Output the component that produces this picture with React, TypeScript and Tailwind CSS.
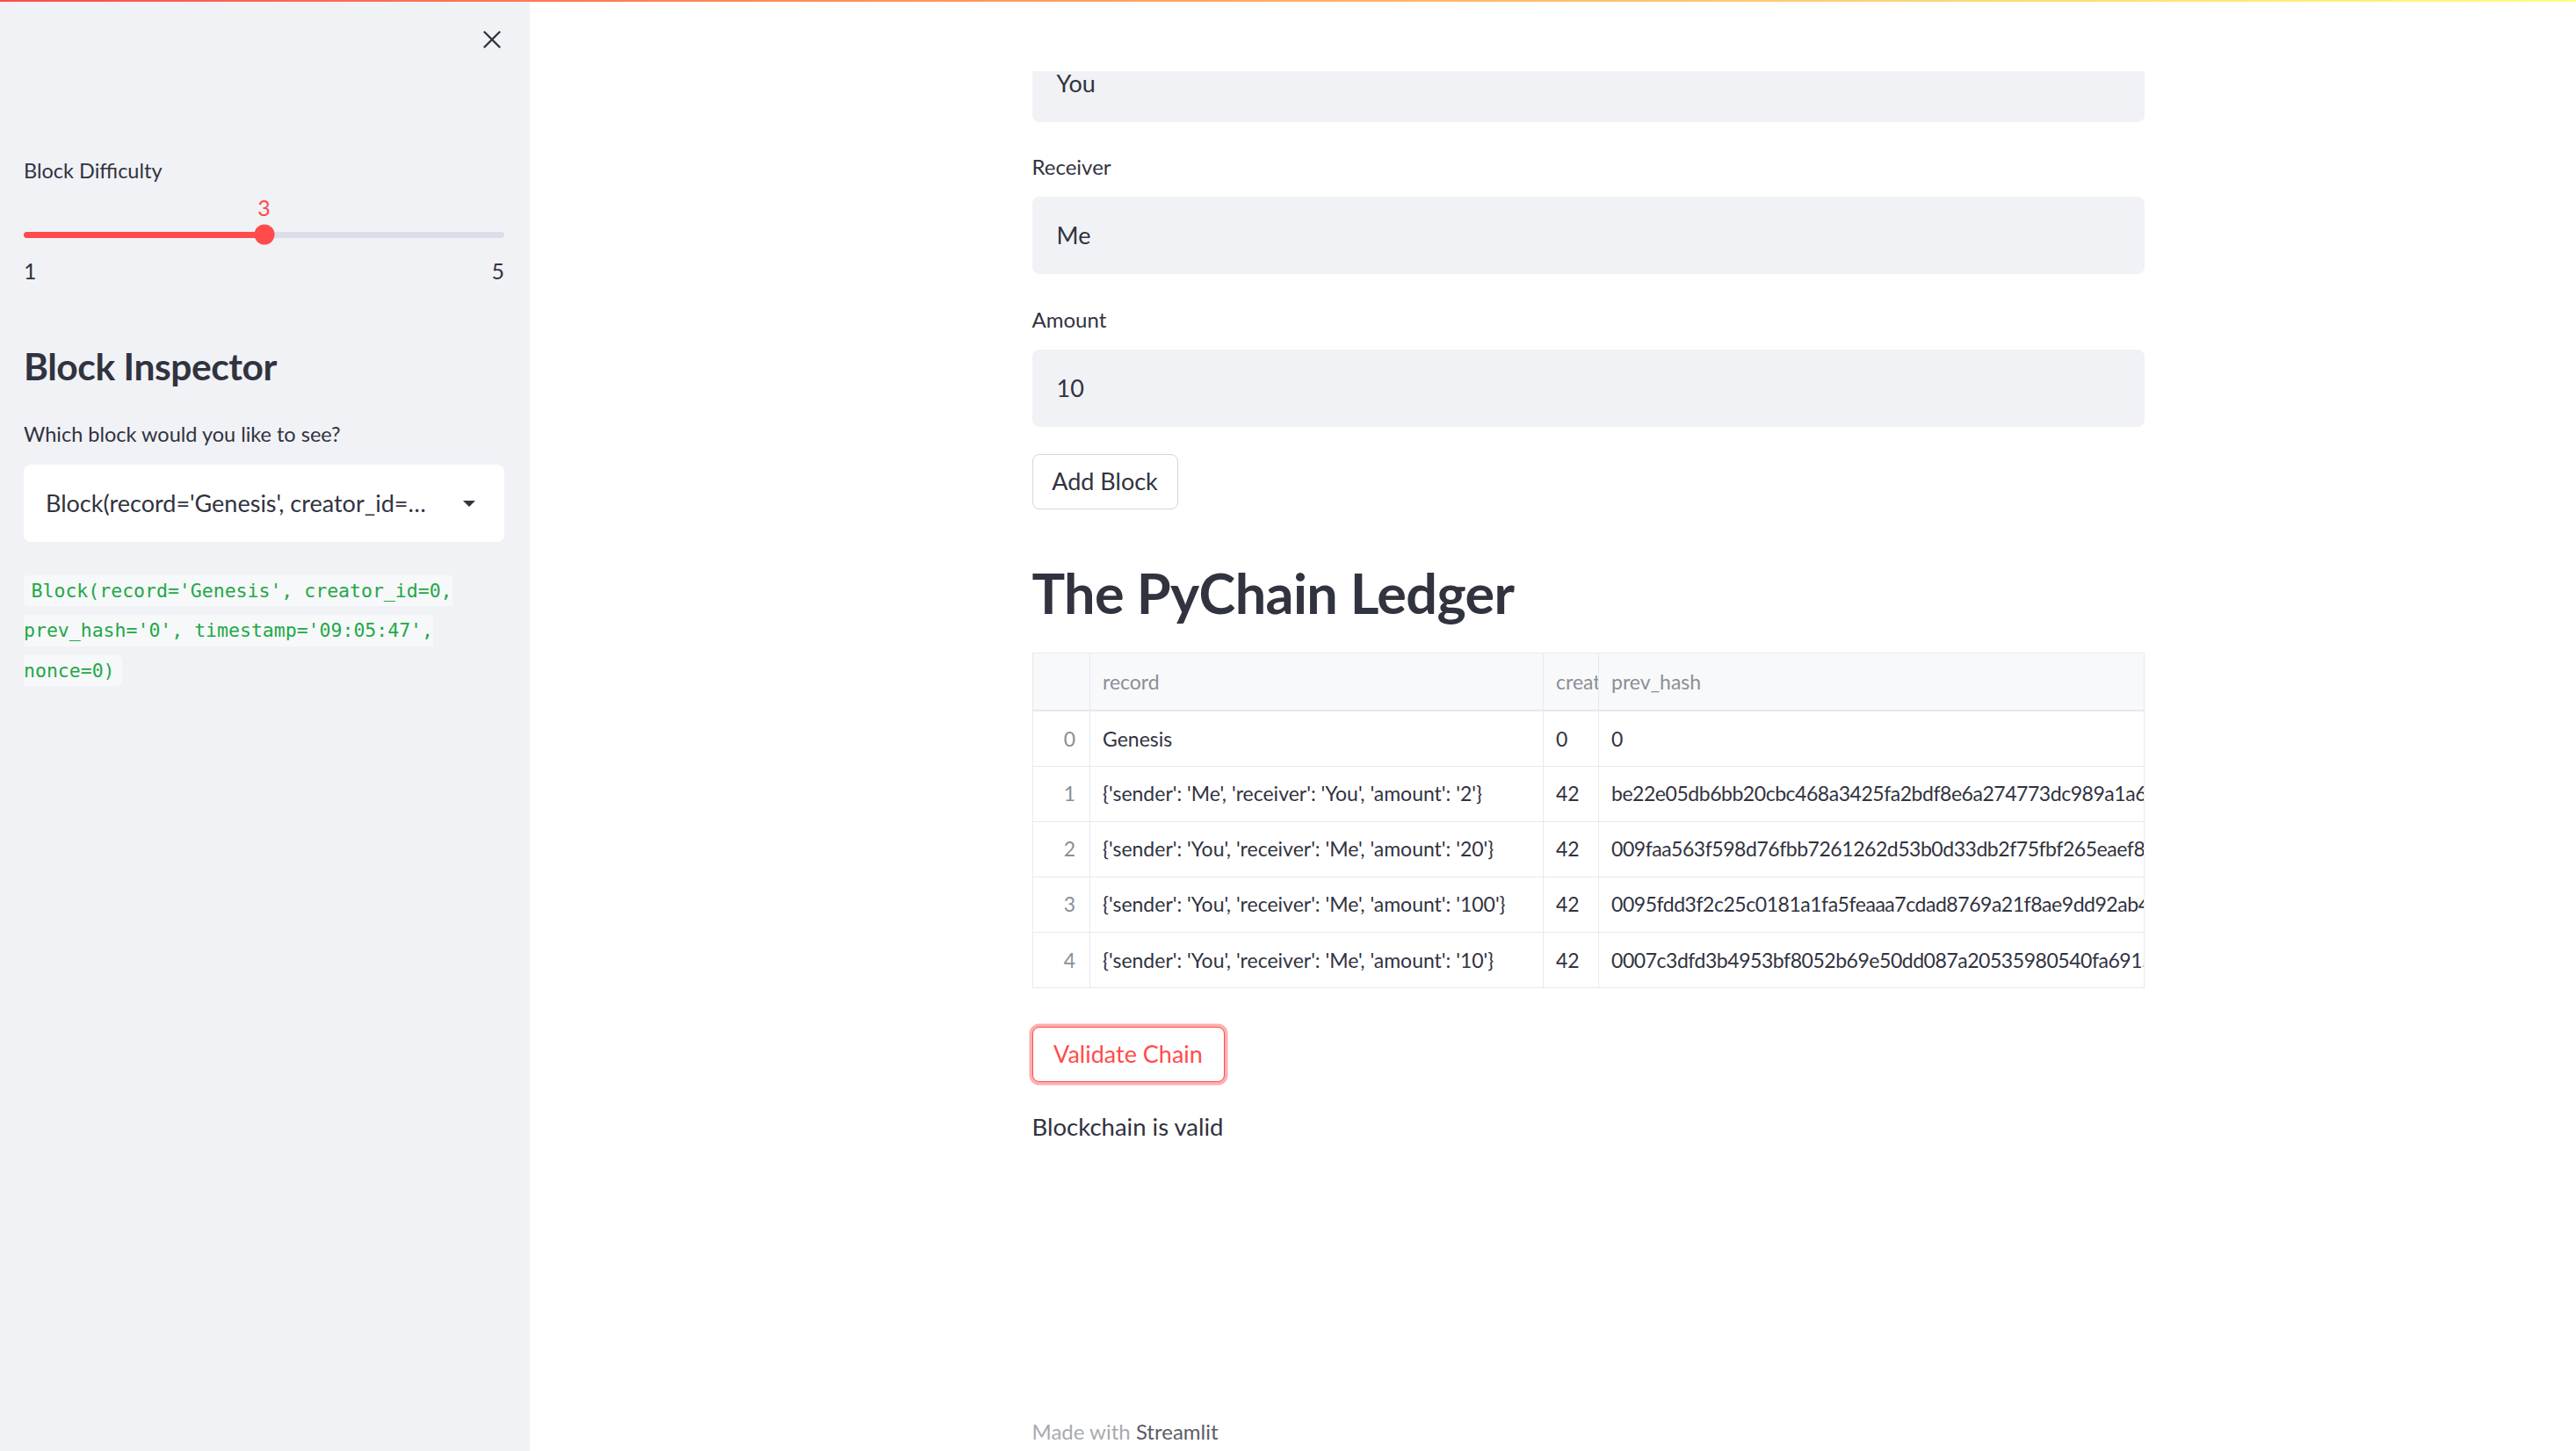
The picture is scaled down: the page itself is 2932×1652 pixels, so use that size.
import React from "react";

const SANS = "font-['Source_Sans_Pro','Lato',sans-serif]";

const rows = [
  { i: 0, record: "Genesis", creator: "0", hash: "0" },
  {
    i: 1,
    record: "{'sender': 'Me', 'receiver': 'You', 'amount': '2'}",
    creator: "42",
    hash: "be22e05db6bb20cbc468a3425fa2bdf8e6a274773dc989a1a6c0e2f71b8d0c3e",
  },
  {
    i: 2,
    record: "{'sender': 'You', 'receiver': 'Me', 'amount': '20'}",
    creator: "42",
    hash: "009faa563f598d76fbb7261262d53b0d33db2f75fbf265eaef8b1c33a7e20d41",
  },
  {
    i: 3,
    record: "{'sender': 'You', 'receiver': 'Me', 'amount': '100'}",
    creator: "42",
    hash: "0095fdd3f2c25c0181a1fa5feaaa7cdad8769a21f8ae9dd92ab47c1e0d3f5a92",
  },
  {
    i: 4,
    record: "{'sender': 'You', 'receiver': 'Me', 'amount': '10'}",
    creator: "42",
    hash: "0007c3dfd3b4953bf8052b69e50dd087a20535980540fa6915e2bd07c4a1f3e8",
  },
];

function Sidebar() {
  const pct = 50;
  return (
    <aside className={`w-[603px] shrink-0 h-full bg-[#f0f2f6] flex flex-col pl-[27px] pr-[29px] text-[#31333f] ${SANS}`}>
      <div className="h-[174px] flex justify-end items-start pt-[25px] mr-[-6px]">
        <div className="w-[40px] h-[40px] flex items-center justify-center">
          <svg width="20" height="20" viewBox="0 0 20 20" fill="none">
            <path d="M1.5 1.5 L18.5 18.5 M18.5 1.5 L1.5 18.5" stroke="#31333f" strokeWidth="2.4" strokeLinecap="round" />
          </svg>
        </div>
      </div>
      <div className="h-[40px] leading-[40px] text-[23.5px]">Block Difficulty</div>
      <div className="relative h-[46px]">
        <div
          className="absolute top-0 h-[46px] flex items-center -translate-x-1/2 text-[25px] text-[#ff4b4b]"
          style={{ left: `${pct}%` }}
        >
          3
        </div>
      </div>
      <div className="relative h-[14px] flex items-center">
        <div className="w-full h-[7px] rounded-full bg-[#dadee8] flex">
          <div className="h-full rounded-full bg-[#ff4b4b]" style={{ width: `${pct}%` }} />
        </div>
        <div
          className="absolute top-1/2 w-[23px] h-[23px] rounded-full bg-[#ff4b4b] -translate-x-1/2 -translate-y-1/2"
          style={{ left: `${pct}%` }}
        />
      </div>
      <div className="mt-[19px] h-[30px] leading-[30px] flex justify-between text-[25px]">
        <span>1</span>
        <span>5</span>
      </div>
      <h2 className="mt-[64px] h-[60px] leading-[60px] text-[42.5px] font-bold tracking-[-0.01em]">Block Inspector</h2>
      <div className="mt-[27px] h-[40px] leading-[40px] text-[23.5px]">Which block would you like to see?</div>
      <div className="mt-[15px] h-[88px] rounded-[8px] bg-white flex items-center pl-[25px] pr-[32px]">
        <span className="flex-1 min-w-0 truncate text-[27px]" title="Block(record='Genesis', creator_id=0, prev_hash='0', timestamp='09:05:47', nonce=0)">
          Block(record='Genesis', creator_id=…
        </span>
        <svg width="16" height="9" viewBox="0 0 16 9" className="ml-[25px] shrink-0">
          <path d="M1 1 L15 1 L8 8 Z" fill="#31333f" />
        </svg>
      </div>
      <p className="mt-[33px] leading-[45.5px] text-[21.5px]">
        <code className="font-['DejaVu_Sans_Mono','Liberation_Mono',monospace] text-[#22a846] bg-[#f7f8fa] rounded-[6px] px-[0.4em] py-[0.25em]">
          Block(record='Genesis', creator_id=0, prev_hash='0', timestamp='09:05:47', nonce=0)
        </code>
      </p>
    </aside>
  );
}

function Input({ value }: { value: string }) {
  return (
    <div className="h-[88px] rounded-[8px] bg-[#f0f2f6] flex items-center pl-[28px] text-[27px] text-[#31333f]">
      {value}
    </div>
  );
}

function Label({ children, className = "" }: { children: React.ReactNode; className?: string }) {
  return <div className={`h-[40px] leading-[40px] text-[24px] text-[#31333f] ${className}`}>{children}</div>;
}

function Cell({ children, className = "" }: { children: React.ReactNode; className?: string }) {
  return <div className={`overflow-hidden whitespace-nowrap ${className}`}>{children}</div>;
}

function Table() {
  return (
    <div className="mt-[20px] w-[1266px] border border-[#e6e9ef] overflow-hidden">
      <table className="table-fixed border-collapse text-[23px] w-[1264px]">
        <colgroup>
          <col className="w-[65px]" />
          <col className="w-[516px]" />
          <col className="w-[63px]" />
          <col className="w-[620px]" />
        </colgroup>
        <thead>
          <tr className="h-[65px] bg-[#f8f9fb] text-[#8c8e95] border-b-2 border-[#e6e9ef]">
            <th className="border-r border-[#e6e9ef]" />
            <th className="text-left font-normal pl-[14px] border-r border-[#e6e9ef]">
              <Cell>record</Cell>
            </th>
            <th className="text-left font-normal pl-[14px] border-r border-[#e6e9ef]">
              <Cell>creator_id</Cell>
            </th>
            <th className="text-left font-normal pl-[14px]">
              <Cell>prev_hash</Cell>
            </th>
          </tr>
        </thead>
        <tbody>
          {rows.map((r, idx) => (
            <tr key={r.i} className={`h-[63px] text-[#31333f] ${idx < rows.length - 1 ? "border-b border-[#e6e9ef]" : ""}`}>
              <td className="text-right pr-[16px] text-[#8c8e95] border-r border-[#e6e9ef]">{r.i}</td>
              <td className="pl-[14px] border-r border-[#e6e9ef]">
                <Cell>{r.record}</Cell>
              </td>
              <td className="pl-[14px] border-r border-[#e6e9ef]">
                <Cell>{r.creator}</Cell>
              </td>
              <td className="pl-[14px]">
                <Cell className="tracking-[-0.02em]">{r.hash}</Cell>
              </td>
            </tr>
          ))}
        </tbody>
      </table>
    </div>
  );
}

function Main() {
  return (
    <main className={`flex-1 h-full flex justify-center pl-[80px] text-[#31333f] ${SANS}`}>
      <div className="w-[1266px] flex flex-col pt-[51px]">
        <Input value="You" />
        <Label className="mt-[31px]">Receiver</Label>
        <div className="mt-[14px]">
          <Input value="Me" />
        </div>
        <Label className="mt-[32px]">Amount</Label>
        <div className="mt-[14px]">
          <Input value="10" />
        </div>
        <div className="mt-[31px]">
          <button className="h-[63px] w-[166px] rounded-[8px] border border-[#d6d6d9] bg-white text-[27px] text-[#31333f]">
            Add Block
          </button>
        </div>
        <h1 className="mt-[47px] h-[96px] leading-[96px] text-[63px] font-bold tracking-[-0.01em]">The PyChain Ledger</h1>
        <Table />
        <div className="mt-[44px]">
          <button className="h-[63px] w-[219px] rounded-[8px] border border-[#ff4b4b] bg-white text-[27px] text-[#ff4b4b] shadow-[0_0_0_3.5px_rgba(255,75,75,0.45)]">
            Validate Chain
          </button>
        </div>
        <p className="mt-[31px] h-[40px] leading-[40px] text-[27.5px]">Blockchain is valid</p>
        <div className="mt-[309px] h-[36px] leading-[36px] text-[24px]">
          <span className="text-[#a9aab0]">Made with </span>
          <span className="text-[#5b5d66]">Streamlit</span>
        </div>
      </div>
    </main>
  );
}

export default function App() {
  return (
    <div className="relative w-[2932px] h-[1652px] overflow-hidden bg-white flex">
      <Sidebar />
      <Main />
      <div className="absolute top-0 left-[603px] right-0 h-[81px] bg-white" />
      <div className="absolute top-0 left-0 right-0 h-[2px] bg-gradient-to-r from-[#ff4b4b] to-[#fffd80]" />
    </div>
  );
}
